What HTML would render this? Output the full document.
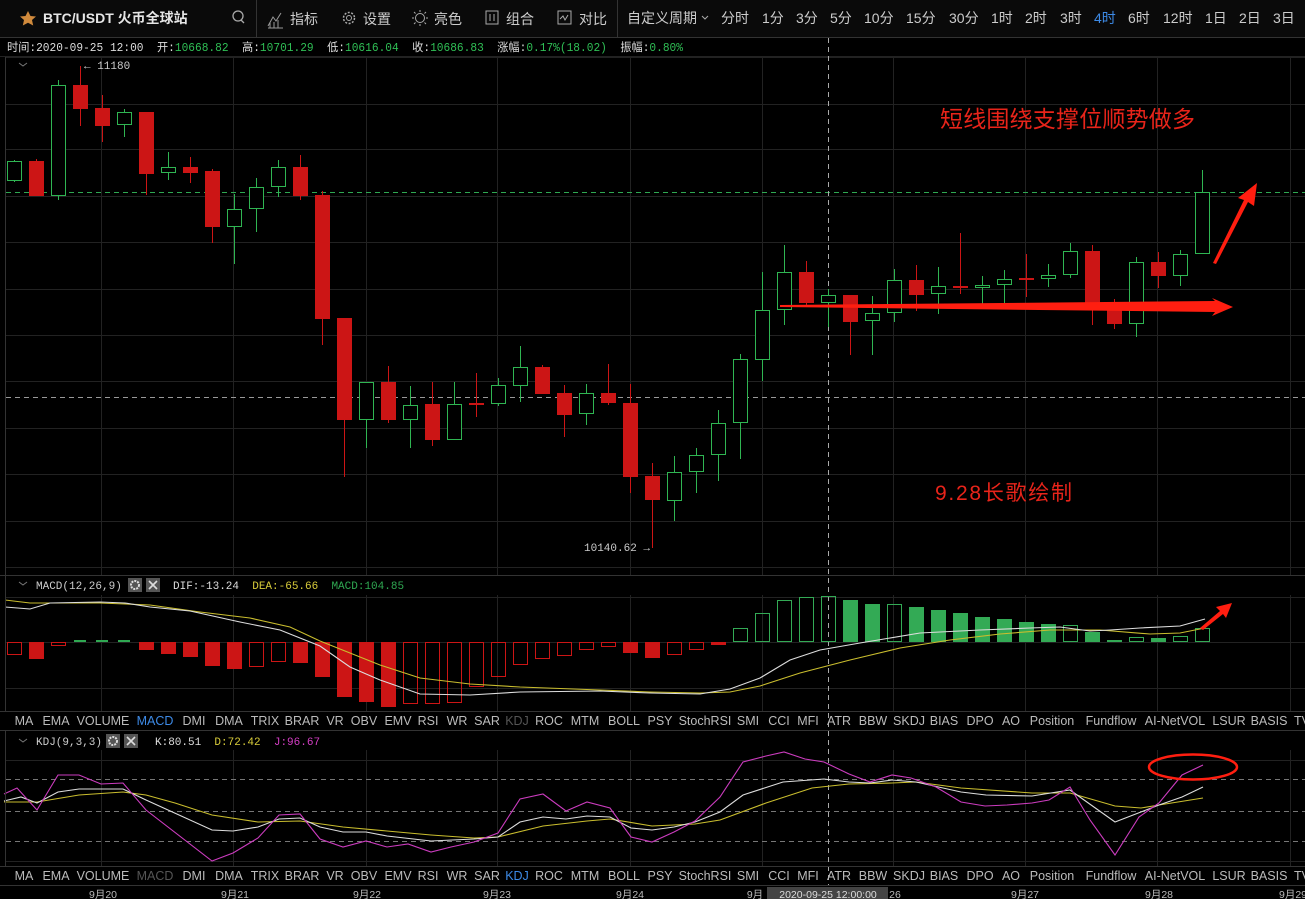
<!DOCTYPE html>
<html><head><meta charset="utf-8"><style>
html,body{margin:0;padding:0;background:#000;width:1305px;height:899px;overflow:hidden}
svg{display:block}
text{font-family:"Liberation Sans","Noto Sans CJK SC",sans-serif}
text.m{font-family:"Liberation Mono","Noto Sans CJK SC",monospace}
</style></head><body>
<svg id="s" width="1305" height="899" viewBox="0 0 1305 899" xmlns="http://www.w3.org/2000/svg">
<rect width="1305" height="899" fill="#000"/>
<rect width="1305" height="37" fill="#0a0a0a"/>
<line x1="0" y1="37.5" x2="1305" y2="37.5" stroke="#333"/>
<line x1="256.5" y1="0" x2="256.5" y2="37" stroke="#333"/>
<line x1="617.5" y1="0" x2="617.5" y2="37" stroke="#333"/>
<path d="M28 11 L30.5 16 L36 16.5 L32 20 L33.2 25.5 L28 22.7 L22.8 25.5 L24 20 L20 16.5 L25.5 16 Z" fill="#d08a3c"/>
<text x="43" y="23" fill="#e6e6e6" font-size="14" font-weight="bold">BTC/USDT 火币全球站</text>
<circle cx="238" cy="16" r="5" fill="none" stroke="#aaa" stroke-width="1.3"/><line x1="241" y1="20" x2="244" y2="23" stroke="#aaa" stroke-width="1.3"/>
<path d="M268 26 L273 17 L276 21 L281 13 M268 28 H283 M270 22 V28 M274 22 V28 M278 20 V28" fill="none" stroke="#999" stroke-width="1"/>
<text x="290" y="24" fill="#ccc" font-size="14">指标</text>
<circle cx="349" cy="18" r="5.5" fill="none" stroke="#aaa" stroke-width="1.5" stroke-dasharray="2 1.5"/><circle cx="349" cy="18" r="2.5" fill="none" stroke="#aaa"/>
<text x="363" y="24" fill="#ccc" font-size="14">设置</text>
<circle cx="420" cy="18" r="4.5" fill="none" stroke="#aaa"/><path d="M420 10v2M420 24v2M412 18h2M426 18h2M414 12l1.5 1.5M424.5 22.5l1.5 1.5M426 12l-1.5 1.5M414 24l1.5-1.5" stroke="#aaa"/>
<text x="434" y="24" fill="#ccc" font-size="14">亮色</text>
<rect x="486" y="11" width="12" height="13" fill="none" stroke="#aaa"/><path d="M490 14v7M494 14v7" stroke="#aaa"/>
<text x="506" y="24" fill="#ccc" font-size="14">组合</text>
<rect x="558" y="11" width="13" height="13" fill="none" stroke="#aaa"/><path d="M560 19l3-3 2 4 3-5" fill="none" stroke="#aaa"/>
<text x="579" y="24" fill="#ccc" font-size="14">对比</text>
<g font-size="14" fill="#ccc">
<text x="627" y="23">自定义周期</text><path d="M702 16l3 3 3-3" fill="none" stroke="#aaa"/>
<text x="721" y="23">分时</text><text x="762" y="23">1分</text><text x="796" y="23">3分</text><text x="830" y="23">5分</text>
<text x="864" y="23">10分</text><text x="906" y="23">15分</text><text x="949" y="23">30分</text><text x="991" y="23">1时</text>
<text x="1025" y="23">2时</text><text x="1060" y="23">3时</text><text x="1094" y="23" fill="#3d8ae6">4时</text><text x="1128" y="23">6时</text>
<text x="1163" y="23">12时</text><text x="1205" y="23">1日</text><text x="1239" y="23">2日</text><text x="1273" y="23">3日</text>
</g>
<line x1="0" y1="56.5" x2="1305" y2="56.5" stroke="#222"/>
<text class="m" x="7" y="51" font-size="11.5" fill="#ddd" textLength="676" lengthAdjust="spacingAndGlyphs" xml:space="preserve">时间:2020-09-25 12:00  开:<tspan fill="#2fbf55">10668.82</tspan>  高:<tspan fill="#2fbf55">10701.29</tspan>  低:<tspan fill="#2fbf55">10616.04</tspan>  收:<tspan fill="#2fbf55">10686.83</tspan>  涨幅:<tspan fill="#2fbf55">0.17%(18.02)</tspan>  振幅:<tspan fill="#2fbf55">0.80%</tspan></text>
<g id="grid" stroke="#222" stroke-width="1"></g>
<g id="main"></g>
<line x1="0" y1="575.5" x2="1305" y2="575.5" stroke="#333"/>
<line x1="0" y1="711.5" x2="1305" y2="711.5" stroke="#333"/>
<line x1="0" y1="730.5" x2="1305" y2="730.5" stroke="#333"/>
<line x1="0" y1="866.5" x2="1305" y2="866.5" stroke="#333"/>
<line x1="0" y1="885.5" x2="1305" y2="885.5" stroke="#333"/>
<line x1="5.5" y1="57" x2="5.5" y2="711" stroke="#333"/>
<line x1="5.5" y1="731" x2="5.5" y2="866" stroke="#333"/>
<path d="M19 63l4 3 4-3" fill="none" stroke="#777"/>
<text class="m" x="84" y="69" fill="#ccc" font-size="11">← 11180</text>
<text class="m" x="584" y="551" fill="#ccc" font-size="11">10140.62 →</text>
<text x="940" y="127" fill="#e8241a" font-size="23" textLength="255">短线围绕支撑位顺势做多</text>
<text x="935" y="500" fill="#e8241a" font-size="21" textLength="137">9.28长歌绘制</text>
<path d="M19 582l4 3 4-3" fill="none" stroke="#777"/>
<text class="m" x="36" y="589" fill="#ccc" font-size="11">MACD(12,26,9)</text>
<rect x="128" y="578" width="14" height="14" fill="#555"/><circle cx="135" cy="585" r="4" fill="none" stroke="#ddd" stroke-width="2" stroke-dasharray="2 1"/>
<rect x="146" y="578" width="14" height="14" fill="#555"/><path d="M149 581l8 8M157 581l-8 8" stroke="#ddd" stroke-width="1.6"/>
<text class="m" x="173" y="589" font-size="11" fill="#ddd" xml:space="preserve">DIF:-13.24  <tspan fill="#d8cc3a">DEA:-65.66</tspan>  <tspan fill="#2fa852">MACD:104.85</tspan></text>
<path d="M19 739l4 3 4-3" fill="none" stroke="#777"/>
<text class="m" x="36" y="745" fill="#ccc" font-size="11">KDJ(9,3,3)</text>
<rect x="106" y="734" width="14" height="14" fill="#555"/><circle cx="113" cy="741" r="4" fill="none" stroke="#ddd" stroke-width="2" stroke-dasharray="2 1"/>
<rect x="124" y="734" width="14" height="14" fill="#555"/><path d="M127 737l8 8M135 737l-8 8" stroke="#ddd" stroke-width="1.6"/>
<text class="m" x="155" y="745" font-size="11" fill="#ddd" xml:space="preserve">K:80.51  <tspan fill="#d8cc3a">D:72.42</tspan>  <tspan fill="#d43ec4">J:96.67</tspan></text>
<g id="tabs1" font-size="12.5" fill="#bbb" text-anchor="middle"></g>
<g id="tabs2" font-size="12.5" fill="#bbb" text-anchor="middle"></g>
<g font-size="10.5" fill="#bbb" text-anchor="middle">
<text x="103" y="898">9月20</text><text x="235" y="898">9月21</text><text x="367" y="898">9月22</text><text x="497" y="898">9月23</text><text x="630" y="898">9月24</text><text x="755" y="898">9月</text><text x="895" y="898">26</text><text x="1025" y="898">9月27</text><text x="1159" y="898">9月28</text><text x="1293" y="898">9月29</text>
</g>
<rect x="767" y="887" width="121" height="12" fill="#444"/>
<text x="828" y="898" font-size="10.5" fill="#ddd" text-anchor="middle">2020-09-25 12:00:00</text>
</svg>
<script>
var NS="http://www.w3.org/2000/svg",s=document.getElementById('s');
function el(t,a,p){var e=document.createElementNS(NS,t);for(var k in a)e.setAttribute(k,a[k]);(p||s).appendChild(e);return e;}
var G=document.getElementById('grid'),M=document.getElementById('main');
[57,104,149,196,242,289,335,381,428,474,521,567].forEach(function(y){el('line',{x1:6,y1:y+.5,x2:1305,y2:y+.5},G)});
[101,233,366,497,630,762,893,1025,1157,1290].forEach(function(x){el('line',{x1:x+.5,y1:57,x2:x+.5,y2:575},G);el('line',{x1:x+.5,y1:595,x2:x+.5,y2:711},G);el('line',{x1:x+.5,y1:750,x2:x+.5,y2:866},G);});
[597,642,688].forEach(function(y){el('line',{x1:6,y1:y+.5,x2:1305,y2:y+.5},G)});
[760,861].forEach(function(y){el('line',{x1:6,y1:y+.5,x2:1305,y2:y+.5},G)});
[779,811,841].forEach(function(y){el('line',{x1:6,y1:y+.5,x2:1305,y2:y+.5,stroke:'#777','stroke-dasharray':'5 4'},M)});
el('line',{x1:6,y1:192.5,x2:1305,y2:192.5,stroke:'#2fa852','stroke-dasharray':'5 4'},M);
el('line',{x1:6,y1:397.5,x2:1305,y2:397.5,stroke:'#999','stroke-dasharray':'5 4'},M);
el('line',{x1:828.5,y1:38,x2:828.5,y2:885,stroke:'#aaa','stroke-dasharray':'5 4'},M);
var C=[[161,181,160,182,1],[161,196,159,196,0],[85,196,80,200,1],[85,109,66,126,0],[108,126,95,142,0],[112,125,109,137,1],[112,174,112,195,0],[167,173,152,180,1],[167,173,157,183,0],[171,227,169,243,0],[209,227,194,264,1],[187,209,178,232,1],[167,187,160,197,1],[167,196,155,200,0],[195,319,191,345,0],[318,420,318,477,0],[382,420,382,448,1],[382,420,366,423,0],[405,420,386,448,1],[404,440,382,446,0],[404,440,382,440,1],[403,405,373,417,0],[385,404,378,406,1],[367,386,346,402,1],[367,394,365,394,0],[393,415,385,437,0],[393,414,384,425,1],[393,403,364,405,0],[403,477,384,493,0],[476,500,463,548,0],[472,501,456,521,1],[455,472,448,493,1],[423,455,410,481,1],[359,423,354,459,1],[310,360,272,381,1],[272,310,245,325,1],[272,303,261,305,0],[295,303,289,327,1],[295,322,295,355,0],[313,321,296,355,1],[280,313,269,322,1],[280,295,265,311,0],[286,294,267,314,1],[286,288,233,294,0],[285,288,276,305,1],[279,285,270,305,1],[278,280,254,297,0],[275,279,264,287,1],[251,275,243,278,1],[251,305,245,325,0],[302,324,299,329,0],[262,324,257,337,1],[262,276,252,288,0],[254,276,250,286,1],[192,254,170,254,1]];
var GR='#2fb552',RD='#cc1515';
C.forEach(function(c,i){var x=14+22*i;var col=c[4]?GR:RD;
 el('line',{x1:x+.5,y1:c[2],x2:x+.5,y2:c[3],stroke:col},M);
 if(c[4])el('rect',{x:x-6.5,y:c[0]+.5,width:14,height:Math.max(c[1]-c[0]-1,1),fill:'#000',stroke:col},M);
 else el('rect',{x:x-7,y:c[0],width:15,height:Math.max(c[1]-c[0],2),fill:col},M);});
var H=[[655,1],[659,0],[646,1],[641,4],[641,4],[641,4],[650,0],[654,0],[657,0],[666,0],[669,0],[667,1],[662,1],[663,0],[677,0],[697,0],[702,0],[707,0],[704,1],[704,1],[703,1],[687,1],[677,1],[665,1],[659,1],[656,1],[650,1],[647,1],[653,0],[658,0],[655,1],[650,1],[645,0],[628,3],[613,3],[600,3],[597,3],[596,3],[600,2],[604,2],[604,3],[607,2],[610,2],[613,2],[617,2],[619,2],[622,2],[624,2],[625,3],[632,2],[640,2],[637,3],[638,2],[636,3],[628,3]];
var Z=642;
H.forEach(function(h,i){var x=14+22*i,y=h[0],t=h[1];
 if(t==4){el('rect',{x:x-6,y:640,width:12,height:2,fill:'#2fa852'},M);return;}
 var top=Math.min(y,Z),ht=Math.abs(y-Z)||1;
 var col=(t<2)?RD:'#33aa55';
 if(t==0||t==2)el('rect',{x:x-7,y:top,width:15,height:ht,fill:col},M);
 else el('rect',{x:x-6.5,y:top+.5,width:14,height:ht-1,fill:'none',stroke:col},M);});
function pl(pts,col,p){el('polyline',{points:pts.map(function(q){return q.join(',')}).join(' '),fill:'none',stroke:col,'stroke-width':1.1},p||M);}
pl([[5,600],[30,603],[100,603],[150,605],[200,612],[250,618],[290,627],[320,641],[350,653],[380,665],[420,678],[470,684],[520,687],[600,690],[650,692],[700,693],[730,692],[760,686],[800,673],[850,660],[900,648],[950,640],[1000,634],[1050,630],[1100,630],[1150,634],[1180,633],[1205,628]],'#c9bd2e');
pl([[5,607],[30,609],[50,603],[100,602],[125,603],[150,607],[190,611],[240,622],[280,630],[320,646],[350,667],[380,680],[420,694],[470,695],[520,692],[600,691],[650,693],[700,694],[730,689],[760,678],[790,660],[820,650],[860,643],[920,633],[980,630],[1030,628],[1060,627],[1090,631],[1110,630],[1140,628],[1180,626],[1205,619]],'#ddd');
pl([[4,802],[37,802],[79,795],[123,792],[146,795],[175,803],[212,815],[258,822],[300,821],[343,827],[387,831],[431,835],[474,838],[498,837],[543,826],[587,821],[610,819],[652,826],[695,824],[720,820],[766,803],[812,788],[849,784],[892,783],[916,782],[961,788],[1032,793],[1070,793],[1115,806],[1141,808],[1159,805],[1203,798]],'#c9bd2e');
pl([[4,801],[21,797],[37,803],[58,792],[79,789],[123,789],[146,800],[212,830],[233,831],[258,827],[279,819],[300,818],[320,827],[343,832],[366,832],[387,836],[431,841],[474,839],[498,837],[520,822],[543,817],[566,819],[587,816],[610,817],[631,828],[652,830],[674,827],[695,822],[720,812],[743,795],[783,782],[824,779],[849,782],[870,783],[892,780],[916,782],[961,792],[986,795],[1032,796],[1070,790],[1115,822],[1159,805],[1182,797],[1203,787]],'#ddd');
pl([[4,794],[17,788],[37,810],[58,775],[79,775],[101,784],[123,783],[146,810],[212,861],[233,853],[258,838],[279,815],[300,814],[320,839],[343,847],[366,841],[387,847],[408,844],[431,852],[451,847],[474,842],[498,833],[520,799],[543,794],[566,811],[587,802],[610,808],[631,837],[652,842],[674,832],[695,821],[720,797],[743,762],[766,756],[784,752],[805,759],[824,762],[849,774],[870,782],[892,775],[911,778],[936,787],[961,802],[985,806],[1007,805],[1032,803],[1049,800],[1070,787],[1090,820],[1115,855],[1139,817],[1159,803],[1182,775],[1203,765]],'#cc3cbf');
var R='#ff1e10';
el('polygon',{points:'780,305 1215,301 1212,298 1233,307 1212,316 1215,312 780,307',fill:R},M);
el('polygon',{points:'1213,263 1244,200 1238,198 1257,183 1254,206 1248,202 1216,264',fill:R},M);
el('polygon',{points:'1200,628 1220,611 1216,607 1232,603 1226,618 1223,614 1203,630',fill:R},M);
el('ellipse',{cx:1193,cy:767,rx:44,ry:12.5,fill:'none',stroke:R,'stroke-width':2.5},M);
var T=[['MA',24],['EMA',56],['VOLUME',103],['MACD',155],['DMI',194],['DMA',229],['TRIX',265],['BRAR',302],['VR',335],['OBV',364],['EMV',398],['RSI',428],['WR',457],['SAR',487],['KDJ',517],['ROC',549],['MTM',585],['BOLL',624],['PSY',660],['StochRSI',705],['SMI',748],['CCI',779],['MFI',808],['ATR',839],['BBW',873],['SKDJ',909],['BIAS',944],['DPO',980],['AO',1011],['Position',1052],['Fundflow',1111],['AI-NetVOL',1175],['LSUR',1229],['BASIS',1269],['TV',1302]];
function tabs(id,y,act,dim){var g=document.getElementById(id);T.forEach(function(t){var e=el('text',{x:t[1],y:y},g);e.textContent=t[0];if(t[0]==act)e.setAttribute('fill','#3d8ae6');if(t[0]==dim)e.setAttribute('fill','#555');});}
tabs('tabs1',725,'MACD','KDJ');tabs('tabs2',880,'KDJ','MACD');
</script>
</body></html>
